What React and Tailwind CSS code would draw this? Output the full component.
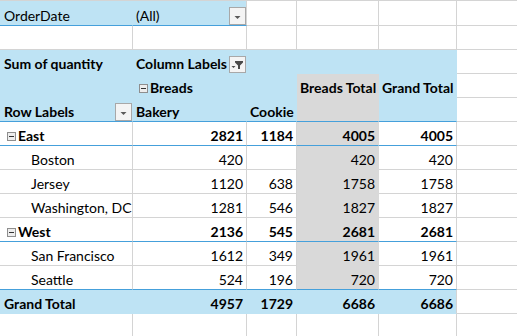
import React from "react";

const BLUE = "bg-[#BEE3F4]";
const GRAY = "bg-[#D9D9D9]";

function DropBtn() {
  return (
    <svg width="17" height="18" viewBox="0 0 17 18" className="shrink-0 block">
      <rect x="0.5" y="0.5" width="16" height="17" fill="#F4F4F4" stroke="#A8A8A8" />
      <polygon points="5.5,9 11.5,9 8.5,12" fill="#5A5A5A" />
    </svg>
  );
}

function FilterBtn() {
  return (
    <svg width="17" height="17" viewBox="0 0 17 17" className="shrink-0 block">
      <rect x="0.5" y="0.5" width="16" height="16" fill="#F4F4F4" stroke="#A8A8A8" />
      <polygon points="2.5,10 6.5,10 4.5,12" fill="#4A4A4A" />
      <polygon points="6,5 14,5 14,6.5 11,9.5 11,13 9,13 9,9.5 6,6.5" fill="#4A4A4A" />
    </svg>
  );
}

function Minus() {
  return (
    <svg width="9" height="9" viewBox="0 0 9 9" className="shrink-0 block mb-[4px]">
      <rect x="0.5" y="0.5" width="8" height="8" fill="#EDEDED" stroke="#8E8E8E" />
      <rect x="2" y="4" width="5" height="1" fill="#333333" />
    </svg>
  );
}

// fill: "blue" | "gray" | undefined ; bottom: "line" | undefined
function Cell({ fill, bottom, rightGrid, children, right, bold, pl, className = "" }) {
  const bg = fill === "blue" ? BLUE : fill === "gray" ? GRAY : "bg-white";
  const br = fill === "blue" && !rightGrid ? "border-r-[#BEE3F4]" : fill === "gray" ? "border-r-[#D9D9D9]" : "border-r-[#D4D4D4]";
  const bb =
    bottom === "line"
      ? "border-b-[#45A0DB]"
      : fill === "blue"
      ? "border-b-[#BEE3F4]"
      : fill === "gray"
      ? "border-b-[#D9D9D9]"
      : "border-b-[#D4D4D4]";
  return (
    <div
      className={`flex items-end border-r border-b whitespace-nowrap min-w-0 ${bg} ${br} ${bb} ${
        right ? "justify-end pr-[3px]" : pl || "pl-[4px]"
      } ${bold ? "font-bold" : ""} ${className}`}
    >
      {children}
    </div>
  );
}

function T({ children }) {
  return <span className="leading-[16px] pb-[1px] text-black">{children}</span>;
}

const data = [
  { label: "East", group: true, v: ["2821", "1184", "4005", "4005"] },
  { label: "Boston", v: ["420", "", "420", "420"] },
  { label: "Jersey", v: ["1120", "638", "1758", "1758"] },
  { label: "Washington, DC", v: ["1281", "546", "1827", "1827"] },
  { label: "West", group: true, v: ["2136", "545", "2681", "2681"] },
  { label: "San Francisco", v: ["1612", "349", "1961", "1961"] },
  { label: "Seattle", v: ["524", "196", "720", "720"], last: true },
];

export default function App() {
  return (
    <div
      className="w-[517px] h-[336px] overflow-hidden bg-white text-[14px]"
      style={{ fontFamily: "Lato, 'Liberation Sans', sans-serif" }}
    >
      <div className="grid grid-cols-[133px_114px_50px_82px_78px_80px] grid-rows-[25px_repeat(13,24px)] border-t border-[#D4D4D4]">
        {/* Row 1 */}
        <Cell fill="blue" bottom="line"><T>OrderDate</T></Cell>
        <Cell fill="blue" bottom="line" rightGrid pl="pl-[3px]" className="justify-between">
          <T>(All)</T>
          <DropBtn />
        </Cell>
        <Cell />
        <Cell />
        <Cell />
        <Cell />

        {/* Row 2 */}
        <Cell /><Cell /><Cell /><Cell /><Cell /><Cell />

        {/* Row 3 */}
        <Cell fill="blue" bold><T>Sum of quantity</T></Cell>
        <Cell fill="blue" bold pl="pl-[3px]" className="justify-between">
          <T>Column Labels</T>
          <FilterBtn />
        </Cell>
        <Cell fill="blue" />
        <Cell fill="blue" />
        <Cell fill="blue" />
        <Cell />

        {/* Row 4 */}
        <Cell fill="blue" />
        <Cell fill="blue" bold pl="pl-[6px]" className="gap-[2px]">
          <Minus />
          <T>Breads</T>
        </Cell>
        <Cell fill="blue" />
        <Cell fill="gray" bold pl="pl-[3px]"><T>Breads Total</T></Cell>
        <Cell fill="blue" bold pl="pl-[3px]"><T>Grand Total</T></Cell>
        <Cell />

        {/* Row 5 */}
        <Cell fill="blue" bottom="line" bold className="justify-between">
          <T>Row Labels</T>
          <DropBtn />
        </Cell>
        <Cell fill="blue" bottom="line" bold pl="pl-[3px]"><T>Bakery</T></Cell>
        <Cell fill="blue" bottom="line" bold pl="pl-[3px]"><T>Cookie</T></Cell>
        <Cell fill="gray" bottom="line" />
        <Cell fill="blue" bottom="line" />
        <Cell />

        {data.map((r) => {
          const line = r.group || r.last ? "line" : undefined;
          return (
            <React.Fragment key={r.label}>
              {r.group ? (
                <Cell bottom={line} bold pl="pl-[7px]" className="gap-[2px]">
                  <Minus />
                  <T>{r.label}</T>
                </Cell>
              ) : (
                <Cell bottom={line} pl="pl-[31px]"><T>{r.label}</T></Cell>
              )}
              <Cell bottom={line} right bold={r.group}><T>{r.v[0]}</T></Cell>
              <Cell bottom={line} right bold={r.group}><T>{r.v[1]}</T></Cell>
              <Cell fill="gray" bottom={line} right bold={r.group}><T>{r.v[2]}</T></Cell>
              <Cell bottom={line} right bold={r.group}><T>{r.v[3]}</T></Cell>
              <Cell />
            </React.Fragment>
          );
        })}

        {/* Grand Total */}
        <Cell fill="blue" bold><T>Grand Total</T></Cell>
        <Cell fill="blue" bold right><T>4957</T></Cell>
        <Cell fill="blue" bold right><T>1729</T></Cell>
        <Cell fill="blue" bold right><T>6686</T></Cell>
        <Cell fill="blue" bold right rightGrid><T>6686</T></Cell>
        <Cell />

        {/* Row 14 */}
        <Cell /><Cell /><Cell /><Cell /><Cell /><Cell />
      </div>
    </div>
  );
}
